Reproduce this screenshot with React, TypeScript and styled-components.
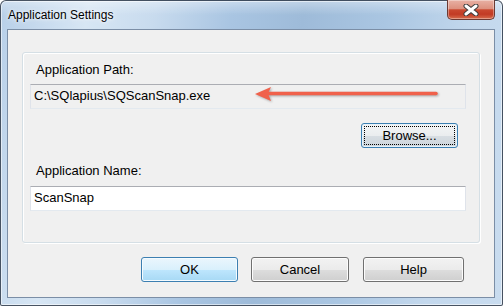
import React from "react";
import styled, { createGlobalStyle, css } from "styled-components";

const GlobalStyle = createGlobalStyle`
  html, body { margin: 0; padding: 0; background: #ffffff; }
  body { font-family: "Liberation Sans", Arial, sans-serif; }
  * { box-sizing: border-box; }
`;

const Window = styled.div`
  width: 503px;
  height: 306px;
  display: flex;
  flex-direction: column;
  padding: 0 7px 7px 6px;
  border: 1px solid rgba(38, 48, 62, 0.8);
  border-radius: 6px 6px 2px 2px;
  box-shadow: inset 0 0 0 1px rgba(255, 255, 255, 0.55);
  background:
    linear-gradient(to bottom, rgba(255, 255, 255, 0.35) 0, rgba(255, 255, 255, 0) 14px),
    linear-gradient(100deg, #b7cfe8 0%, #d7e6f4 16%, #c8dbee 28%, #a9c5e2 42%, #9ebbd9 55%, #aac6e2 70%, #c3d8ed 86%, #c9dcef 100%);
`;

const TitleBar = styled.div`
  height: 28px;
  display: flex;
  justify-content: space-between;
  align-items: flex-start;
  padding: 7px 0 0 1px;
`;

const Title = styled.div`
  font-family: "Liberation Sans", Arial, sans-serif;
  font-size: 12px;
  line-height: 14px;
  color: #000;
  text-shadow: 0 0 6px rgba(255, 255, 255, 0.9), 0 0 3px rgba(255, 255, 255, 0.9);
`;

const CloseButton = styled.div`
  width: 48px;
  height: 20px;
  margin-top: -8px;
  display: flex;
  align-items: center;
  justify-content: center;
  border: 1px solid #6b3a33;
  border-top: none;
  border-radius: 0 0 5px 5px;
  background: linear-gradient(to bottom, #e8b1a4 0%, #dd917f 45%, #c9482f 52%, #c23b24 75%, #d66d4d 100%);
  box-shadow: inset 0 0 0 1px rgba(255, 255, 255, 0.35);
`;

const Client = styled.div`
  flex: 1;
  display: flex;
  flex-direction: column;
  background: #f0f0f0;
  border: 1px solid #7b8ea6;
`;

const GroupBox = styled.div`
  width: 458px;
  height: 191px;
  margin: 22px 0 0 14px;
  padding: 9px 13px 0 7px;
  display: flex;
  flex-direction: column;
  border: 1px solid #d5dfe5;
  border-radius: 3px;
  box-shadow: 1px 1px 0 #ffffff, inset 1px 1px 0 #ffffff;
`;

const FieldLabel = styled.div<{ $gap?: number }>`
  height: 15px;
  line-height: 15px;
  font-size: 13px;
  color: #000;
  margin-left: 6px;
  margin-top: ${(p) => p.$gap ?? 0}px;
`;

const FieldWrap = styled.div<{ $gap: number }>`
  position: relative;
  margin-top: ${(p) => p.$gap}px;
`;

const TextField = styled.div<{ $readOnly?: boolean }>`
  height: 25px;
  padding: 3px 3px 0;
  line-height: 15px;
  font-size: 13px;
  color: #000;
  white-space: nowrap;
  background: ${(p) => (p.$readOnly ? "#f0f0f0" : "#ffffff")};
  border: 1px solid #dfe3ea;
  border-top-color: #abadb3;
  border-bottom-color: #e3e9ef;
`;

const ArrowSvg = styled.svg`
  position: absolute;
  left: 0;
  top: 0;
  width: 100%;
  height: 100%;
  overflow: visible;
  pointer-events: none;
  filter: drop-shadow(1px 1.5px 1px rgba(0, 0, 0, 0.3));
`;

const BrowseRow = styled.div`
  display: flex;
  justify-content: flex-end;
  padding-right: 8px;
  margin-top: 14px;
`;

const ButtonBar = styled.div`
  display: flex;
  align-items: flex-start;
  margin: 14px 0 0 133px;
`;

const Button = styled.div<{ $variant?: "normal" | "default" | "focused"; $width?: number; $gap?: number }>`
  position: relative;
  width: ${(p) => p.$width ?? 97}px;
  margin-left: ${(p) => p.$gap ?? 0}px;
  height: 25px;
  display: flex;
  align-items: center;
  justify-content: center;
  font-size: 13px;
  color: #000;
  border-radius: 3px;
  border: 1px solid #707070;
  box-shadow: inset 0 0 0 1px #fcfcfc;
  background: linear-gradient(to bottom, #f2f2f2 0%, #ebebeb 50%, #dddddd 51%, #cfcfcf 100%);
  ${(p) =>
    p.$variant === "default" &&
    css`
      border-color: #3c7fb1;
      box-shadow: inset 0 0 0 1px #f4fbff;
      background: linear-gradient(to bottom, #eaf6fd 0%, #d9f0fc 50%, #bee6fd 51%, #a7d9f5 100%);
    `}
  ${(p) =>
    p.$variant === "focused" &&
    css`
      border-color: #3c7fb1;
      box-shadow: inset 0 0 0 1px #e6f2fa;
      background: linear-gradient(to bottom, #f3f5f6 0%, #eaedef 50%, #d8dee3 51%, #cbd4db 100%);
      &::after {
        content: "";
        position: absolute;
        inset: 2px;
        border: 1px dotted #000;
        border-radius: 1px;
      }
    `}
`;

export default function App() {
  return (
    <>
      <GlobalStyle />
      <Window>
        <TitleBar>
          <Title>Application Settings</Title>
          <CloseButton>
            <svg width="16" height="12" viewBox="0 0 16 12">
              <path d="M3 2 L13 10 M13 2 L3 10" stroke="#3b3b3b" strokeWidth="5" strokeLinecap="round" />
              <path d="M3 2 L13 10 M13 2 L3 10" stroke="#ffffff" strokeWidth="3" strokeLinecap="round" />
            </svg>
          </CloseButton>
        </TitleBar>
        <Client>
          <GroupBox>
            <FieldLabel>Application Path:</FieldLabel>
            <FieldWrap $gap={7}>
              <TextField $readOnly>C:\SQlapius\SQScanSnap.exe</TextField>
              <ArrowSvg>
                <line x1="238" y1="9.5" x2="406" y2="9.5" stroke="#f0614b" strokeWidth="3.5" strokeLinecap="round" />
                <polygon points="225,10 241,3 238,9.5 241,17" fill="#f0614b" />
              </ArrowSvg>
            </FieldWrap>
            <BrowseRow>
              <Button $variant="focused">Browse...</Button>
            </BrowseRow>
            <FieldLabel $gap={15}>Application Name:</FieldLabel>
            <FieldWrap $gap={8}>
              <TextField>ScanSnap</TextField>
            </FieldWrap>
          </GroupBox>
          <ButtonBar>
            <Button $variant="default">OK</Button>
            <Button $width={98} $gap={13}>Cancel</Button>
            <Button $width={101} $gap={14}>Help</Button>
          </ButtonBar>
        </Client>
      </Window>
    </>
  );
}
